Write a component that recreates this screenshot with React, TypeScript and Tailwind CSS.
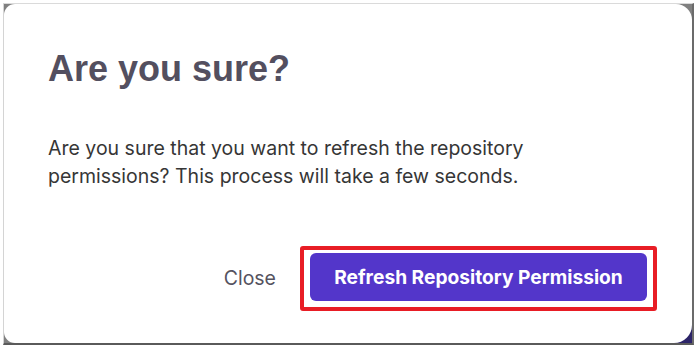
import React from 'react';

// Confirmation dialog for refreshing repository permissions
export default function App() {
  return (
    <div className="w-[698px] h-[349px] bg-white pt-[3px] pl-[3px]">
      <div className="w-[691px] h-[342px] border-t border-l border-t-[#dadada] border-l-[#d4d4d4] border-r-2 border-b-2 border-r-[#6b6b6b] border-b-[#5a5a5a] bg-[linear-gradient(135deg,#808080_88%,#2c2468_88%)]">
        <div className="w-full h-full bg-white rounded-tl-[11px] rounded-bl-[11px] rounded-tr-[16px] rounded-br-[18px] pl-[44px] pr-[35px] pt-[43px] flex flex-col">
          <h1 className="font-['Liberation_Sans',Arial,sans-serif] font-bold text-[36px] leading-[43px] text-[#534f5f]">
            Are you sure?
          </h1>
          <p className="mt-[44px] font-['Inter',sans-serif] text-[19.5px] leading-[28px] text-[#363636] w-[560px]">
            Are you sure that you want to refresh the repository permissions? This process will take a few seconds.
          </p>
          <div className="mt-[56px] flex items-center justify-end gap-[24px]">
            <button className="font-['Inter',sans-serif] text-[19.5px] text-[#55535f]">Close</button>
            <div className="border-4 border-[#e81d25] rounded-[3px] pl-[6px] pr-[6px] pt-[3px] pb-[6px]">
              <button className="w-[337px] h-[48px] rounded-[6px] bg-[#5336ca] font-['Inter',sans-serif] font-bold text-[19.2px] text-white">
                Refresh Repository Permission
              </button>
            </div>
          </div>
        </div>
      </div>
    </div>
  );
}
